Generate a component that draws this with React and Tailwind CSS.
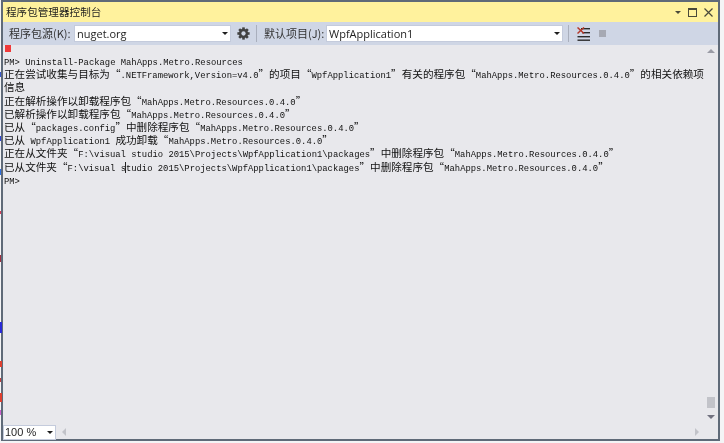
import React from "react";

const lines = [
  "PM> Uninstall-Package MahApps.Metro.Resources",
  "正在尝试收集与目标为“.NETFramework,Version=v4.0”的项目“WpfApplication1”有关的程序包“MahApps.Metro.Resources.0.4.0”的相关依赖项",
  "信息",
  "正在解析操作以卸载程序包“MahApps.Metro.Resources.0.4.0”",
  "已解析操作以卸载程序包“MahApps.Metro.Resources.0.4.0”",
  "已从“packages.config”中删除程序包“MahApps.Metro.Resources.0.4.0”",
  "已从 WpfApplication1 成功卸载“MahApps.Metro.Resources.0.4.0”",
  "正在从文件夹“F:\\visual studio 2015\\Projects\\WpfApplication1\\packages”中删除程序包“MahApps.Metro.Resources.0.4.0”",
  "已从文件夹“F:\\visual studio 2015\\Projects\\WpfApplication1\\packages”中删除程序包“MahApps.Metro.Resources.0.4.0”",
  "PM>",
];

function Line({ text }) {
  const parts = text.match(/[\x20-\x7e]+|[^\x20-\x7e]+/g) || [];
  return (
    <div className="h-[13.2px] leading-[13.2px] whitespace-pre text-[#111]">
      {parts.map((p, i) =>
        /^[\x20-\x7e]/.test(p) ? (
          <span key={i} className="text-[8.85px] font-['Liberation_Mono',monospace]">{p}</span>
        ) : (
          <span key={i} className="text-[10.6px] font-['Noto_Sans_CJK_SC',sans-serif]">{p}</span>
        )
      )}
    </div>
  );
}

function Caret() {
  return <div className="w-0 h-0 border-l-[3px] border-r-[3px] border-t-[3px] border-l-transparent border-r-transparent border-t-[#1e1e1e]" />;
}

function Combo({ text, className }) {
  return (
    <div className={"h-[17px] bg-white border border-[#c4cbdc] flex items-center justify-between pl-[2px] pr-[2px] " + className}>
      <span className="text-[11px] text-[#1e1e1e] font-['Open_Sans',sans-serif] leading-none">{text}</span>
      <Caret />
    </div>
  );
}

function Sep() {
  return <div className="w-[1px] h-[17px] bg-[#a9afbd]" />;
}

function Gear() {
  return (
    <svg width="13" height="13" viewBox="0 0 14 14">
      <g fill="#424242">
        <circle cx="7" cy="7" r="5" />
        {[0, 45, 90, 135].map((a) => (
          <rect key={a} x="5.6" y="0.4" width="2.8" height="13.2" transform={`rotate(${a} 7 7)`} />
        ))}
      </g>
      <circle cx="7" cy="7" r="2.3" fill="#cfd6e5" />
    </svg>
  );
}

function ClearIcon() {
  return (
    <svg width="13" height="14" viewBox="0 0 13 14">
      <g fill="#2b2b2b">
        <rect x="4" y="1" width="9" height="1.4" />
        <rect x="5" y="5" width="8" height="1.4" />
        <rect x="0.5" y="9" width="12.5" height="1.4" />
        <rect x="0.5" y="12.5" width="12.5" height="1.4" />
      </g>
      <path d="M0.5 0.5 L7 6.5 M7 0.5 L0.5 6.5" stroke="#b5382a" strokeWidth="1.5" fill="none" />
    </svg>
  );
}

export default function App() {
  return (
    <div lang="zh-CN" className="relative w-[724px] h-[443px] bg-[#f4f4f6] overflow-hidden" style={{ filter: "blur(0.3px)" }}>
      <div className="w-[719px] h-[441px] ml-[1px] border-2 border-[#5f6a78] flex flex-col">
        <div className="h-[20px] shrink-0 bg-[#fff29d] flex items-center justify-between pl-[3px] pr-[5px]">
          <span className="text-[10.6px] text-[#1e1e1e] font-['Noto_Sans_CJK_SC',sans-serif] leading-none">程序包管理器控制台</span>
          <div className="flex items-center gap-[7px]">
            <div className="w-0 h-0 border-l-[3px] border-r-[3px] border-t-[3px] border-l-transparent border-r-transparent border-t-[#4a4a3a]" />
            <div className="w-[9px] h-[9px] border border-[#4a4a3a] border-t-2" />
            <svg width="9" height="9" viewBox="0 0 9 9"><path d="M0.5 0.5 L8.5 8.5 M8.5 0.5 L0.5 8.5" stroke="#4a4a3a" strokeWidth="1.2" /></svg>
          </div>
        </div>
        <div className="h-[23px] shrink-0 bg-[#cfd6e5] flex items-center pl-[6px]">
          <span className="w-[65px] text-[#333] text-[11px] font-['Noto_Sans_CJK_SC',sans-serif] leading-none">程序包源(K):</span>
          <Combo text="nuget.org" className="w-[157px]" />
          <div className="w-[25px] flex justify-center"><Gear /></div>
          <Sep />
          <span className="w-[62px] ml-[7px] text-[#333] text-[11px] font-['Noto_Sans_CJK_SC',sans-serif] leading-none">默认项目(J):</span>
          <Combo text="WpfApplication1" className="w-[237px]" />
          <div className="ml-[5px]"><Sep /></div>
          <div className="ml-[8px]"><ClearIcon /></div>
          <div className="ml-[9px] w-[7px] h-[7px] bg-[#a6a9b3]" />
        </div>
        <div className="relative flex-1 bg-[#e8e8ec] flex flex-col min-h-0">
          <div className="flex-1 pl-[1px] min-h-0">
            <div className="ml-[1px] w-[6px] h-[7px] bg-[#f03a3a]" />
            <div className="pt-[1px]">
              {lines.map((l, i) => <Line key={i} text={l} />)}
            </div>
          </div>
          <div className="h-[14px] shrink-0 flex items-center">
            <div className="w-[53px] h-[15px] bg-white border border-[#c4cbdc] flex items-center justify-between pl-[1px] pr-[2px]">
              <span className="text-[11px] text-[#1e1e1e] font-['Liberation_Sans',sans-serif] leading-none">100 %</span>
              <Caret />
            </div>
            <div className="ml-[6px] w-0 h-0 border-t-[4px] border-b-[4px] border-r-[4px] border-t-transparent border-b-transparent border-r-[#c2c3c9]" />
            <div className="ml-auto mr-[19px] w-0 h-0 border-t-[4px] border-b-[4px] border-l-[4px] border-t-transparent border-b-transparent border-l-[#c2c3c9]" />
          </div>
          {/* vertical scrollbar */}
          <div className="absolute right-[1px] top-[4px] bottom-[20px] w-[12px] flex flex-col items-center">
            <div className="w-0 h-0 border-l-[4px] border-r-[4px] border-b-[4px] border-l-transparent border-r-transparent border-b-[#9a9ba5]" />
            <div className="mt-auto w-[8px] h-[11px] bg-[#c2c3c9]" />
            <div className="mt-[7px] w-0 h-0 border-l-[4px] border-r-[4px] border-t-[4px] border-l-transparent border-r-transparent border-t-[#71717f]" />
          </div>
          {/* text caret */}
          <div className="absolute left-[122px] top-[117px] w-[1px] h-[11px] bg-[#222]" />
        </div>
      </div>
      {/* marks of the neighbouring window, at the left edge */}
      <div className="absolute left-0 top-[72px] w-[1px] h-[5px] bg-[#3b5bd0]" />
      <div className="absolute left-0 top-[136px] w-[1px] h-[5px] bg-[#2f45d8]" />
      <div className="absolute left-0 top-[169px] w-[1px] h-[6px] bg-[#2f6fe0]" />
      <div className="absolute left-0 top-[211px] w-[1px] h-[3px] bg-[#d8405a]" />
      <div className="absolute left-0 top-[255px] w-[1px] h-[7px] bg-[#a03040]" />
      <div className="absolute left-0 top-[322px] w-[2px] h-[11px] bg-[#2a2ad8]" />
      <div className="absolute left-0 top-[361px] w-[2px] h-[6px] bg-[#e04030]" />
      <div className="absolute left-0 top-[378px] w-[1px] h-[4px] bg-[#c04040]" />
      <div className="absolute left-0 top-[393px] w-[2px] h-[9px] bg-[#e04030]" />
      <div className="absolute left-0 top-[410px] w-[1px] h-[5px] bg-[#d060d0]" />
    </div>
  );
}
